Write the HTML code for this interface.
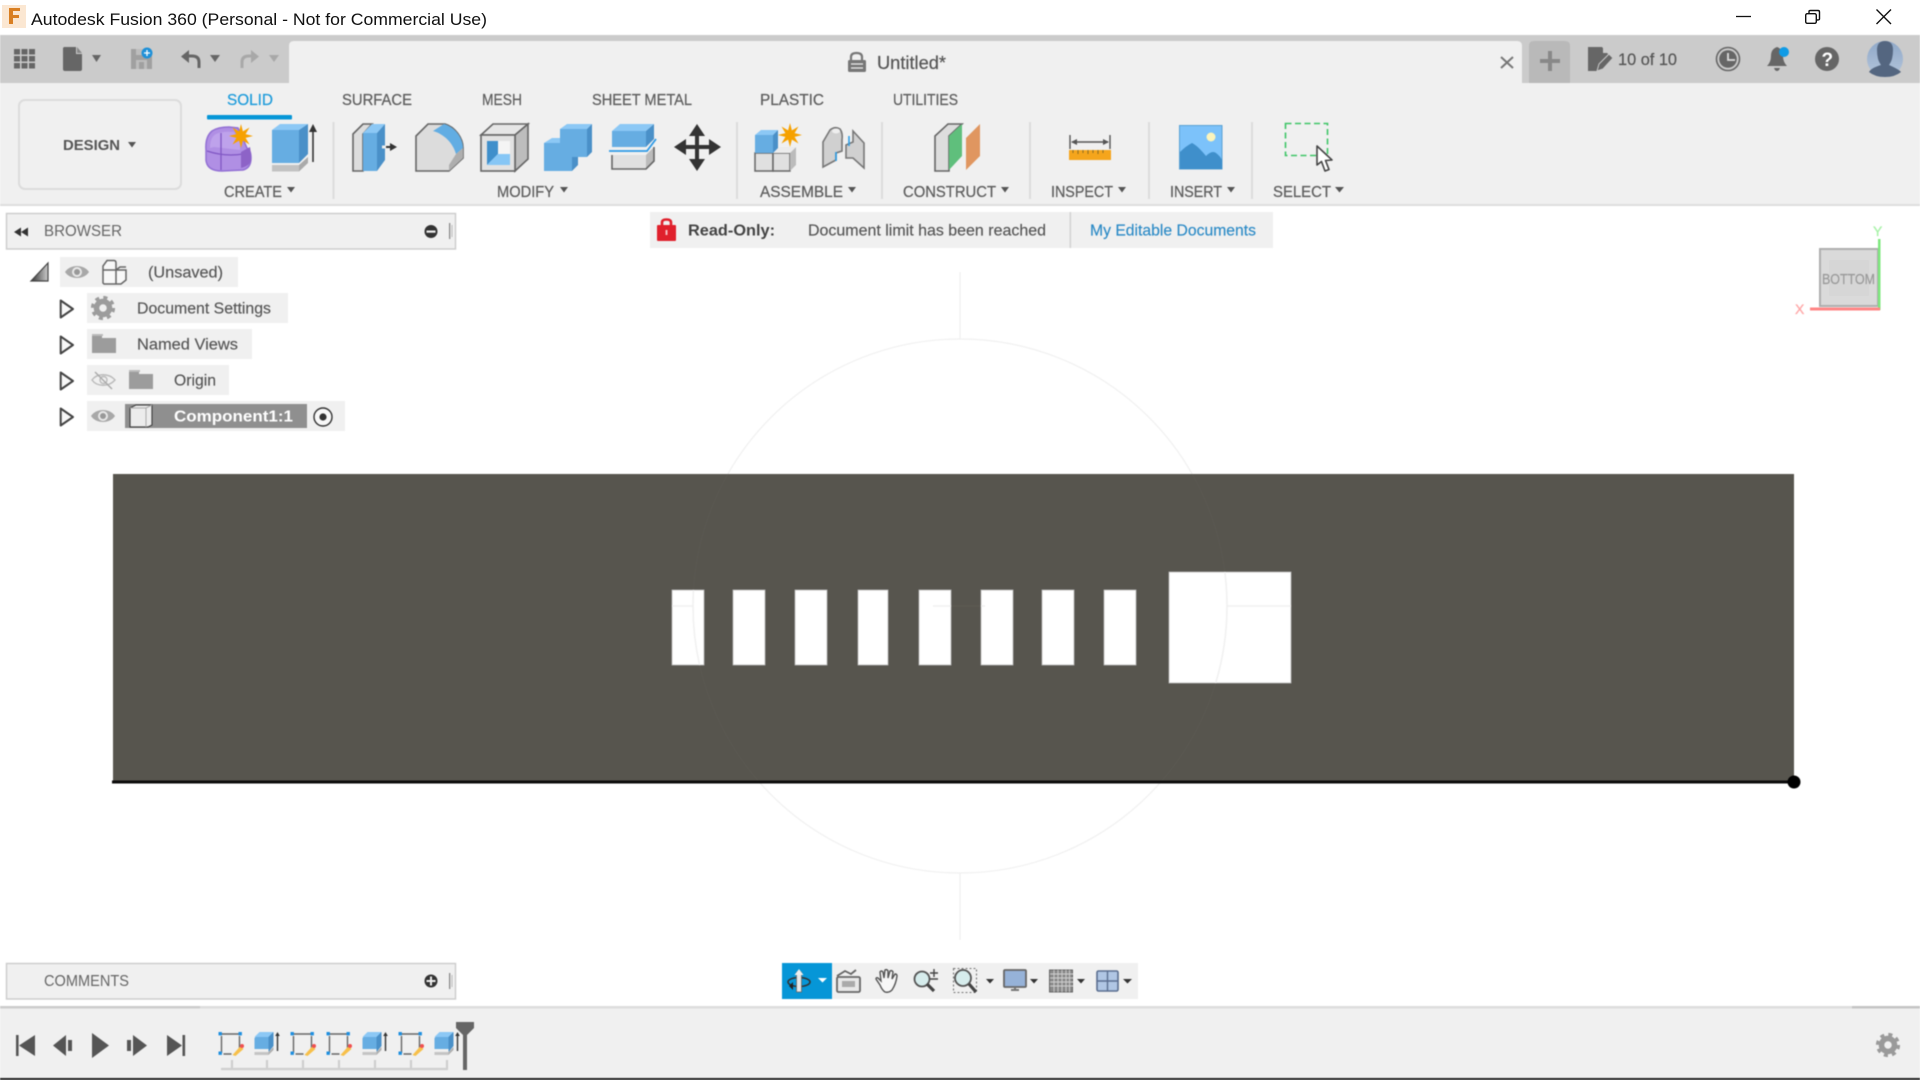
<!DOCTYPE html>
<html><head><meta charset="utf-8"><title>Autodesk Fusion 360</title>
<style>
html,body{margin:0;padding:0;background:#fff;width:1920px;height:1080px;overflow:hidden}
svg{display:block;position:absolute;left:0;top:0}
text{font-family:"Liberation Sans",sans-serif}
.b{filter:blur(.55px)}
</style></head><body>
<svg width="1920" height="1080" viewBox="0 0 1920 1080" xmlns="http://www.w3.org/2000/svg">
<defs>
<clipPath id="holes"><rect x="672" y="590" width="32" height="75"/><rect x="733" y="590" width="32" height="75"/><rect x="795" y="590" width="32" height="75"/><rect x="858" y="590" width="30" height="75"/><rect x="919" y="590" width="32" height="75"/><rect x="981" y="590" width="32" height="75"/><rect x="1042" y="590" width="32" height="75"/><rect x="1104" y="590" width="32" height="75"/><rect x="1169" y="572" width="122" height="111"/></clipPath>
<clipPath id="outside"><rect x="0" y="206" width="1920" height="268"/><rect x="0" y="783" width="1920" height="220"/></clipPath>
<clipPath id="dark"><rect x="113" y="474" width="1681" height="308"/></clipPath>
<polygon id="star" points="0,-12 1.9,-4.6 8.5,-8.5 4.6,-1.9 12,0 4.6,1.9 8.5,8.5 1.9,4.6 0,12 -1.9,4.6 -8.5,8.5 -4.6,1.9 -12,0 -4.6,-1.9 -8.5,-8.5 -1.9,-4.6" fill="#f6a100"/>
<g id="gear"><circle r="6.5" fill="none" stroke="currentColor" stroke-width="5.5"/><circle r="10.3" fill="none" stroke="currentColor" stroke-width="3.6" stroke-dasharray="4 4.09"/></g>
<g id="eye"><path d="M-12,0 C-7,-8 7,-8 12,0 C7,8 -7,8 -12,0Z" fill="#a8a8a8"/><circle r="5" fill="#e8e8e8"/><circle r="3" fill="#999"/></g>
<polygon id="arr" points="0.7,0 0.7,17 13,8.5" fill="#f8f8f8" stroke="#444" stroke-width="2" stroke-linejoin="round"/>
<g id="folder"><path d="M0,3 H10 V5 H24 V20 H0Z" fill="#9c9c9c"/><path d="M0,1 H11 V3 H0Z" fill="#bbb"/></g>
<g id="sk"><path d="M3,2 H21 M3,4 V21 M21,4 V16 M5,22 H13" stroke="#666" stroke-width="1.4" fill="none"/><rect x="0" y="0" width="3.4" height="3.4" fill="#1e8fe0"/><rect x="20" y="0" width="3.4" height="3.4" fill="#1e8fe0"/><rect x="0" y="19.5" width="3.4" height="3.4" fill="#1e8fe0"/><path d="M14,23 L22,14 L25,17 L17,24Z" fill="#f7c04a"/><circle cx="23.5" cy="14" r="2" fill="#f05050"/></g>
<g id="ex"><polygon points="0,6 6,0 19,0 14,6 14,17 0,17" fill="#66ade2"/><polygon points="0,5 5,0 19,0 14,5" fill="#8cc8f5"/><polygon points="14,5 19,0 19,14 14,20" fill="#4a90c8"/><rect x="0" y="20" width="14" height="3" fill="#c4c4c4"/><polygon points="14,20 19,15 19,18 14,23" fill="#b0b0b0"/><path d="M23,3 V19" stroke="#333" stroke-width="1.4"/><polygon points="23,0 25.3,4 20.7,4" fill="#333"/></g>
</defs>

<!-- Title bar -->
<rect width="1920" height="35" fill="#fff"/>
<rect x="2" y="5" width="24" height="23" fill="#fbe7d2"/>
<path d="M9,8 H20 V11 H13 V15 H19 V18 H13 V24 H9Z" fill="#d97f22"/>
<text x="31" y="25" font-size="17" fill="#111" textLength="456" lengthAdjust="spacingAndGlyphs">Autodesk Fusion 360 (Personal - Not for Commercial Use)</text>
<path d="M1736,16.5 H1751" stroke="#111" stroke-width="1.3"/>
<rect x="1805.7" y="13.7" width="10.6" height="9.6" rx="1.5" fill="#fff" stroke="#111" stroke-width="1.4"/>
<path d="M1809,13 V11.5 Q1809,10.5 1810.5,10.5 H1818 Q1819.5,10.5 1819.5,12 V19 Q1819.5,20 1817,20" fill="none" stroke="#111" stroke-width="1.4"/>
<path d="M1876.5,9.5 L1891,24 M1891,9.5 L1876.5,24" stroke="#111" stroke-width="1.4"/>

<g class="b">
<!-- Tab bar -->
<rect y="35" width="1920" height="48" fill="#cbcbcb"/>
<path d="M289,83 V46 Q289,41 294,41 H1517 Q1522,41 1522,46 V83Z" fill="#f0f0f0"/>
<path d="M1529,83 V46 Q1529,41 1534,41 H1565 Q1570,41 1570,46 V83Z" fill="#b9b9b9"/>
<g fill="#666"><rect x="14" y="49" width="6" height="5.5"/><rect x="21.5" y="49" width="6" height="5.5"/><rect x="29" y="49" width="6" height="5.5"/><rect x="14" y="56" width="6" height="5.5"/><rect x="21.5" y="56" width="6" height="5.5"/><rect x="29" y="56" width="6" height="5.5"/><rect x="14" y="63" width="6" height="5.5"/><rect x="21.5" y="63" width="6" height="5.5"/><rect x="29" y="63" width="6" height="5.5"/></g>
<path d="M64,47 H76 V54 H82 V69 Q82,71 80,71 H65 Q63,71 63,69 V48Z" fill="#666"/><path d="M77,47 L82,53 H77Z" fill="#888"/>
<polygon points="92,55 101,55 96.5,62" fill="#666"/>
<path d="M131,49 H147 L152,54 V69 H131Z" fill="#a0a0a0"/><rect x="136" y="49" width="9" height="6" fill="#bdbdbd"/><rect x="136" y="60" width="11" height="9" fill="#bdbdbd"/><rect x="139" y="62" width="5" height="7" fill="#a0a0a0"/>
<circle cx="147" cy="53" r="5.5" fill="#1e90d8"/><path d="M147,50 V56 M144,53 H150" stroke="#fff" stroke-width="1.3"/>
<path d="M199,68 V62 Q199,56 192,56 H185" fill="none" stroke="#666" stroke-width="3"/><polygon points="181,56.5 189,50 189,63" fill="#666"/>
<polygon points="210,55 220,55 215,62" fill="#666"/>
<path d="M242,68 V62 Q242,56 249,56 H255" fill="none" stroke="#a8a8a8" stroke-width="3"/><polygon points="259,56.5 251,50 251,63" fill="#a8a8a8"/>
<polygon points="269,55 279,55 274,62" fill="#a8a8a8"/>
<path d="M851,60 V57 Q851,53 856.5,53 Q862,53 862,57 V60" fill="none" stroke="#777" stroke-width="2.2"/><rect x="848" y="60" width="18" height="12" rx="1.5" fill="#777"/><path d="M851,64 H863 M851,68 H863" stroke="#f0f0f0" stroke-width="1.2"/>
<text x="877" y="69" font-size="18" fill="#555" stroke="#555" stroke-width=".2" textLength="69" lengthAdjust="spacingAndGlyphs">Untitled*</text>
<path d="M1501,57 L1513,68 M1513,57 L1501,68" stroke="#777" stroke-width="2"/>
<path d="M1550,51 V71 M1540,61 H1560" stroke="#888" stroke-width="4"/>
<path d="M1588,47 H1602 L1608,54 V58 L1598,71 H1588Z" fill="#666"/><path d="M1603,47 L1608,53 H1603Z" fill="#cbcbcb"/><path d="M1597,71 L1599,64 L1609,54 L1613,58 L1603,69Z" fill="#666" stroke="#cbcbcb" stroke-width="1"/>
<text x="1618" y="65" font-size="17" fill="#555" stroke="#555" stroke-width=".2" textLength="59" lengthAdjust="spacingAndGlyphs">10 of 10</text>
<circle cx="1728" cy="59" r="11.5" fill="none" stroke="#666" stroke-width="1.6"/><circle cx="1728" cy="59" r="8.8" fill="#666"/><path d="M1728,53 V60 H1735" fill="none" stroke="#ddd" stroke-width="1.8"/>
<path d="M1767,66 Q1771,62 1771,56 Q1771,49 1777,47 Q1783,49 1783,56 Q1783,62 1787,66Z" fill="#666"/><path d="M1774,68 H1780 Q1779,71 1777,71 Q1775,71 1774,68Z" fill="#666"/>
<circle cx="1784" cy="52" r="5" fill="#0f9be6"/>
<circle cx="1827" cy="59" r="12" fill="#666"/><text x="1821.5" y="66" font-size="19" font-weight="bold" fill="#fff">?</text>
<defs><linearGradient id="av" x1="0" y1="0" x2="0" y2="1"><stop offset="0" stop-color="#8fa8c8"/><stop offset="1" stop-color="#b5c6dc"/></linearGradient></defs>
<circle cx="1885" cy="59" r="18" fill="url(#av)"/>
<path d="M1877,50 Q1877,41 1885,41 Q1893,41 1893,50 Q1893,60 1889,65 Q1900,70 1901,72 Q1895,77 1885,77 Q1875,77 1869,72 Q1871,68 1881,65 Q1877,60 1877,50Z" fill="#546680"/>

<!-- Toolbar -->
<rect y="83" width="1920" height="121" fill="#f0f0f0"/>
<rect y="204" width="1920" height="2" fill="#dedede"/>
<rect x="19" y="100" width="162" height="89" rx="6" fill="#f0f0f0" stroke="#dcdcdc" stroke-width="2"/>
<text x="63" y="150" font-size="15" font-weight="bold" fill="#555" textLength="57" lengthAdjust="spacingAndGlyphs">DESIGN</text>
<polygon points="128,142 136,142 132,147.5" fill="#555"/>
<text x="227" y="105" font-size="16" fill="#1f9cdb" stroke="#1f9cdb" stroke-width=".25" textLength="46" lengthAdjust="spacingAndGlyphs">SOLID</text>
<rect x="207" y="115" width="85" height="4.5" rx="1" fill="#0696d7"/>
<g font-size="16" fill="#5e5e5e" stroke="#5e5e5e" stroke-width=".25">
<text x="342" y="105" textLength="70" lengthAdjust="spacingAndGlyphs">SURFACE</text>
<text x="482" y="105" textLength="40" lengthAdjust="spacingAndGlyphs">MESH</text>
<text x="592" y="105" textLength="100" lengthAdjust="spacingAndGlyphs">SHEET METAL</text>
<text x="760" y="105" textLength="64" lengthAdjust="spacingAndGlyphs">PLASTIC</text>
<text x="893" y="105" textLength="65" lengthAdjust="spacingAndGlyphs">UTILITIES</text>
<text x="224" y="197" textLength="58" lengthAdjust="spacingAndGlyphs">CREATE</text>
<text x="497" y="197" textLength="57" lengthAdjust="spacingAndGlyphs">MODIFY</text>
<text x="760" y="197" textLength="83" lengthAdjust="spacingAndGlyphs">ASSEMBLE</text>
<text x="903" y="197" textLength="93" lengthAdjust="spacingAndGlyphs">CONSTRUCT</text>
<text x="1051" y="197" textLength="62" lengthAdjust="spacingAndGlyphs">INSPECT</text>
<text x="1170" y="197" textLength="52" lengthAdjust="spacingAndGlyphs">INSERT</text>
<text x="1273" y="197" textLength="58" lengthAdjust="spacingAndGlyphs">SELECT</text>
</g>
<g fill="#555">
<polygon points="287,187 295,187 291,192.5"/><polygon points="560,187 568,187 564,192.5"/><polygon points="848,187 856,187 852,192.5"/><polygon points="1001,187 1009,187 1005,192.5"/><polygon points="1118,187 1126,187 1122,192.5"/><polygon points="1227,187 1235,187 1231,192.5"/><polygon points="1335,187 1344,187 1339.5,192.5"/>
</g>
<g fill="#dcdcdc"><rect x="332.5" y="122" width="2" height="77"/><rect x="736" y="122" width="2" height="77"/><rect x="881" y="122" width="2" height="77"/><rect x="1029" y="122" width="2" height="77"/><rect x="1148" y="122" width="2" height="77"/><rect x="1251" y="122" width="2" height="77"/></g>

<!-- Create form -->
<path d="M206,150 Q205,137 212,131 Q218,127 229,127 L238,128 L247,148 Q251,150 251,158 Q251,168 243,170 L222,171 Q207,171 206,160Z" fill="#b08fe4" stroke="#9270d4" stroke-width="1.5"/>
<path d="M210,148 Q210,137 216,134 Q222,131 234,132 L240,142 L240,150 L214,147Z" fill="#c4aaee" opacity=".7"/>
<path d="M207,151 Q225,157 243,154 M221,133 V170" stroke="#8157c4" stroke-width="1.3" fill="none"/>
<path d="M241,152 L250,147 Q251,152 251,160 Q250,166 241,168Z" fill="#8d63c7"/>
<use href="#star" transform="translate(241,136)"/>
<!-- Extrude -->
<polygon points="272,130 299,130 299,163 272,163" fill="#66ade2"/><polygon points="272,130 280,124 308,124 299,130" fill="#8cc8f5"/><polygon points="299,130 308,124 308,154 299,163" fill="#4a90c8"/>
<rect x="272" y="165" width="27" height="6.5" fill="#c2c2c2"/><polygon points="299,165 308,157 308,163 299,171.5" fill="#aaa"/>
<path d="M313,130 V162" stroke="#333" stroke-width="1.6"/><polygon points="313,124 317,132 309,132" fill="#333"/>
<!-- Press pull -->
<path d="M353,171 V134 L363,124 H372 L363,134 V171Z" fill="#ddd" stroke="#666" stroke-width="1.6"/>
<polygon points="363,133 377,133 377,171 363,171" fill="#66ade2"/><polygon points="363,133 372,124 385,124 377,133" fill="#8cc8f5"/><polygon points="377,133 385,124 385,160 377,171" fill="#4a90c8"/>
<path d="M382,147 H392" stroke="#333" stroke-width="2"/><polygon points="397,147 390,143 390,151" fill="#333"/>
<path d="M382,147 H386" stroke="#eee" stroke-width="3"/>
<!-- Fillet -->
<path d="M416,171 V136 L428,124 H445 C455,127 463,138 463,148 V158 L449,171Z" fill="#dcdcdc" stroke="#666" stroke-width="1.6"/>
<path d="M433,131 L444,124 C455,127 463,138 463,148 L456,154 C453,143 444,134 433,131Z" fill="#62ade3"/>
<path d="M456,154 L463,148 V158 L449,171 V165Z" fill="#aeaeae"/>
<!-- Shell -->
<polygon points="481,135 493,124 528,124 515,135" fill="#e6e6e6" stroke="#666" stroke-width="1.6"/><polygon points="515,135 528,124 528,159 515,171" fill="#bdbdbd" stroke="#666" stroke-width="1.6"/><rect x="481" y="135" width="34" height="36" fill="#e2e2e2" stroke="#666" stroke-width="1.6"/>
<rect x="487" y="141" width="23" height="24" fill="#f4f4f4"/><polygon points="487,141 498,141 498,154 487,165" fill="#3f8fcb"/><polygon points="498,154 510,154 510,165 487,165" fill="#86c6f5"/>
<!-- Combine -->
<polygon points="544,143 572,143 572,171 544,171" fill="#66ade2"/><polygon points="544,143 552,138 566,138 560,143" fill="#8cc8f5"/><polygon points="572,157 578,157 578,165 572,171" fill="#4a90c8"/>
<polygon points="560,129 587,129 587,157 560,157" fill="#66ade2"/><polygon points="560,129 567,124 592,124 587,129" fill="#8cc8f5"/><polygon points="587,129 592,124 592,152 587,157" fill="#4a90c8"/>
<!-- Offset plane -->
<polygon points="612,131 646,131 646,147 612,147" fill="#66ade2"/><polygon points="612,131 620,124 654,124 646,131" fill="#8cc8f5"/><polygon points="646,131 654,124 654,139 646,147" fill="#4a90c8"/>
<path d="M609,151 H647 L656,139" fill="none" stroke="#2e9ae6" stroke-width="1.8"/>
<path d="M612,155 H646 L654,147 V161 L646,169 H612Z" fill="#e0e0e0"/><path d="M646,155 L654,147 V161 L646,169Z" fill="#bbb"/>
<path d="M612,155 V169 H646 L654,161 V147" fill="none" stroke="#666" stroke-width="1.6"/>
<!-- Move -->
<path d="M697,128 V166 M678,147 H716" stroke="#333" stroke-width="4"/>
<polygon points="697,124 705,136 689,136" fill="#333"/><polygon points="697,171 705,159 689,159" fill="#333"/><polygon points="674,147 686,139 686,155" fill="#333"/><polygon points="721,147 709,139 709,155" fill="#333"/>
<!-- New component -->
<rect x="755" y="153" width="18" height="18" fill="#e0e0e0" stroke="#666" stroke-width="1.5"/><path d="M773,153 H790 V171 H773Z" fill="#e0e0e0" stroke="#666" stroke-width="1.5"/><polygon points="790,153 796,147 796,165 790,171" fill="#bbb"/><polygon points="773,153 779,147 796,147 790,153" fill="#ececec"/>
<polygon points="755,135 773,135 773,153 755,153" fill="#66ade2"/><polygon points="755,135 761,130 778,130 773,135" fill="#8cc8f5"/><polygon points="773,135 778,130 778,148 773,153" fill="#4a90c8"/>
<use href="#star" transform="translate(790,135)"/>
<!-- Joint -->
<path d="M823,167 V142 L830,130 Q835,126 840,129 Q843,133 842,140 V151 L836,153 V160Z" fill="#d0d0d0" stroke="#777" stroke-width="1.6"/>
<ellipse cx="836" cy="131" rx="4" ry="2.5" fill="#eee"/>
<path d="M846,145 L853,142 V131 L864,143 V168 L853,158 H846Z" fill="#d0d0d0" stroke="#777" stroke-width="1.6"/>
<path d="M836,152 V161 M849,136 V146" stroke="#2d9ee6" stroke-width="1.6"/>
<!-- Construct -->
<path d="M935,171 V136 L948,124 H962 L949,136 V171Z" fill="#ddd" stroke="#666" stroke-width="1.6"/>
<polygon points="949,136 962,124 962,156 949,170" fill="#5fbf7c"/>
<polygon points="966,138 980,124 980,156 966,170" fill="#e09660"/>
<!-- Measure -->
<path d="M1070,135 V149 M1110,135 V149" stroke="#555" stroke-width="1.4"/><path d="M1072,142 H1108" stroke="#555" stroke-width="1.4"/><polygon points="1071,142 1077,139 1077,145" fill="#555"/><polygon points="1109,142 1103,139 1103,145" fill="#555"/>
<rect x="1069" y="150" width="42" height="10" fill="#f5a51c"/><path d="M1073,150 V153 M1078,150 V154 M1083,150 V153 M1088,150 V154 M1093,150 V153 M1098,150 V154 M1103,150 V153" stroke="#8a6a22" stroke-width="1"/>
<!-- Insert -->
<rect x="1179.5" y="125.5" width="42.5" height="43.5" fill="#7cc2fa" stroke="#5aa2d4"/>
<path d="M1180,169 V152 Q1186,146 1192,143 Q1198,146 1206,156 Q1212,150 1216,153 Q1220,156 1222,160 V169Z" fill="#3f8fcb"/>
<circle cx="1211" cy="137" r="4.5" fill="#fbf4bc"/>
<!-- Select -->
<rect x="1285.5" y="123.5" width="42" height="32" fill="none" stroke="#3ec567" stroke-width="1.6" stroke-dasharray="6 3.5"/>
<path d="M1317,146 V165 L1321.5,161.5 L1325,171 L1329,169.5 L1325.5,160.5 L1332,160 Z" fill="#fff" stroke="#444" stroke-width="1.6" stroke-linejoin="round"/>

<!-- Viewport faint guides -->
<path d="M960,272 V339 M960,873 V940" stroke="#efefef" stroke-width="1.2"/>
<circle cx="960" cy="606" r="267" fill="none" stroke="#f0f0f0" stroke-width="1.2" clip-path="url(#outside)"/>

<!-- Body -->
<rect x="113" y="474" width="1681" height="308" fill="#57554e"/>
<circle cx="960" cy="606" r="267" fill="none" stroke="#5a5851" stroke-width="1.2" clip-path="url(#dark)"/>
<path d="M930,606 H985" stroke="#5c5a53" stroke-width="1.2"/>
<g fill="#fff" stroke="#bbb" stroke-width=".8">
<rect x="672" y="590" width="32" height="75"/><rect x="733" y="590" width="32" height="75"/><rect x="795" y="590" width="32" height="75"/><rect x="858" y="590" width="30" height="75"/><rect x="919" y="590" width="32" height="75"/><rect x="981" y="590" width="32" height="75"/><rect x="1042" y="590" width="32" height="75"/><rect x="1104" y="590" width="32" height="75"/><rect x="1169" y="572" width="122" height="111"/>
</g>
<g clip-path="url(#holes)"><circle cx="960" cy="606" r="267" fill="none" stroke="#f0f0f0" stroke-width="1.5"/>
<path d="M672,606 H693 M933,606 H985 M1227,606 H1291" stroke="#f0f0f0" stroke-width="1.5"/></g>
<path d="M112,782 H1794" stroke="#0c0c0c" stroke-width="3"/>
<circle cx="1794" cy="782" r="6.5" fill="#000"/>

<!-- Read-only -->
<rect x="650" y="212" width="623" height="36" fill="#f0f0f0"/>
<path d="M662,226 V222.5 Q662,219.5 666.5,219.5 Q671,219.5 671,222.5 V226" fill="none" stroke="#e0202c" stroke-width="2.6"/><rect x="657" y="225" width="19" height="16" rx="1" fill="#e0202c"/><rect x="665.5" y="230" width="2" height="5" fill="#fff" opacity=".7"/>
<text x="688" y="235.5" font-size="16" font-weight="bold" fill="#444" textLength="87" lengthAdjust="spacingAndGlyphs">Read-Only:</text>
<text x="808" y="235.5" font-size="16" fill="#555" stroke="#555" stroke-width=".15" textLength="238" lengthAdjust="spacingAndGlyphs">Document limit has been reached</text>
<rect x="1069.5" y="212" width="1.6" height="36" fill="#d4d4d4"/>
<text x="1090" y="235.5" font-size="16" fill="#2b8ac6" stroke="#2b8ac6" stroke-width=".15" textLength="166" lengthAdjust="spacingAndGlyphs">My Editable Documents</text>

<!-- Viewcube -->
<rect x="1820" y="249" width="58" height="57" fill="#dadada" stroke="#aeaeae" stroke-width="2"/>
<rect x="1829" y="260" width="40" height="36" fill="#d6d6d6"/>
<text x="1822" y="284" font-size="15" fill="#9a9a9a" stroke="#9a9a9a" stroke-width=".2" textLength="53" lengthAdjust="spacingAndGlyphs">BOTTOM</text>
<rect x="1878" y="239" width="2.5" height="71" fill="#7ce87c"/>
<rect x="1810" y="307.5" width="70" height="3" fill="#ff8585"/>
<text x="1873" y="236" font-size="14" fill="#a8f2a8" stroke="#a8f2a8" stroke-width=".3">Y</text>
<text x="1795" y="314" font-size="14" fill="#ffa8a8" stroke="#ffa8a8" stroke-width=".3">X</text>

<!-- Browser -->
<rect x="6.5" y="213.5" width="449" height="35.5" fill="#f0f0f0" stroke="#cbcbcb" stroke-width="1.4"/>
<polygon points="14,232 21,227.5 21,236.5" fill="#333"/><polygon points="21,232 28,227.5 28,236.5" fill="#333"/>
<text x="44" y="236" font-size="15.5" fill="#666" textLength="78" lengthAdjust="spacingAndGlyphs">BROWSER</text>
<circle cx="431" cy="231.5" r="6.5" fill="#333"/><rect x="426.5" y="230.5" width="9" height="2.2" fill="#f0f0f0"/>
<rect x="449" y="223" width="1.3" height="16" fill="#888"/><rect x="451.5" y="225" width="1" height="12" fill="#bbb"/>
<g fill="#f0f0f0"><rect x="60" y="257" width="178" height="30"/><rect x="87" y="293" width="201" height="30"/><rect x="87" y="329" width="165" height="30"/><rect x="87" y="365" width="142" height="30"/><rect x="87" y="401" width="258" height="30"/></g>
<defs><linearGradient id="tri" x1="0" y1="0" x2="1" y2="0"><stop offset="0" stop-color="#333"/><stop offset="1" stop-color="#ccc"/></linearGradient></defs>
<polygon points="31,281 48,263 48,281" fill="url(#tri)" stroke="#444" stroke-width="1.2"/>
<use href="#arr" x="60" y="300.5"/><use href="#arr" x="60" y="336.5"/><use href="#arr" x="60" y="372.5"/><use href="#arr" x="60" y="408.5"/>
<use href="#eye" x="77" y="272"/>
<path d="M103,283 V266 L107,260.5 H114 Q116,260.5 116,263 V270 H126 V280 L121,284 H104Z M103,270 H116 V284 M116,270 L120,267 H126" fill="#f8f8f8" stroke="#666" stroke-width="1.5"/>
<text x="148" y="277.5" font-size="15.5" fill="#555" stroke="#555" stroke-width=".15" textLength="75" lengthAdjust="spacingAndGlyphs">(Unsaved)</text>
<use href="#gear" x="103" y="308" color="#9c9c9c"/>
<text x="137" y="313.5" font-size="15.5" fill="#555" stroke="#555" stroke-width=".15" textLength="134" lengthAdjust="spacingAndGlyphs">Document Settings</text>
<use href="#folder" x="92" y="333"/>
<text x="137" y="349.5" font-size="15.5" fill="#555" stroke="#555" stroke-width=".15" textLength="101" lengthAdjust="spacingAndGlyphs">Named Views</text>
<path d="M92,380 C97,373 109,373 115,380 C109,387 97,387 92,380Z" fill="none" stroke="#bbb" stroke-width="1.4"/><circle cx="103.5" cy="380" r="3.5" fill="none" stroke="#bbb" stroke-width="1.4"/><path d="M95,372 L112,389" stroke="#aaa" stroke-width="1.4"/>
<use href="#folder" x="129" y="369"/>
<text x="174" y="385.5" font-size="15.5" fill="#555" stroke="#555" stroke-width=".15" textLength="42" lengthAdjust="spacingAndGlyphs">Origin</text>
<use href="#eye" x="103" y="416"/>
<rect x="125" y="404" width="182" height="24" fill="#8f8f8f"/>
<path d="M130,408 L136,405 H152 V425 L148,427 H130Z" fill="#ececec" stroke="#444" stroke-width="1.2"/><path d="M130,408 H146 V427 M146,408 L152,405" fill="none" stroke="#aaa" stroke-width="1"/>
<text x="174" y="421.5" font-size="15.5" font-weight="bold" fill="#fff" textLength="119" lengthAdjust="spacingAndGlyphs">Component1:1</text>
<circle cx="323" cy="417" r="9" fill="#f8f8f8" stroke="#333" stroke-width="1.4"/><circle cx="323" cy="417" r="3.6" fill="#333"/>

<!-- Comments -->
<rect x="6.5" y="963.5" width="449" height="35.5" fill="#f0f0f0" stroke="#cbcbcb" stroke-width="1.4"/>
<text x="44" y="986" font-size="15.5" fill="#666" textLength="85" lengthAdjust="spacingAndGlyphs">COMMENTS</text>
<circle cx="431" cy="981" r="6.5" fill="#333"/><path d="M426.5,981 H435.5 M431,976.5 V985.5" stroke="#f0f0f0" stroke-width="2"/>
<rect x="449" y="973" width="1.3" height="16" fill="#888"/><rect x="451.5" y="975" width="1" height="12" fill="#bbb"/>

<!-- Nav bar -->
<rect x="782" y="963" width="356" height="36" fill="#f0f0f0"/>
<rect x="782" y="963" width="50" height="36" fill="#0696d7"/>
<ellipse cx="799" cy="982" rx="11" ry="4.5" fill="none" stroke="#333" stroke-width="1.6"/>
<rect x="796.5" y="972" width="5" height="20" fill="#e8e8e8" stroke="#666" stroke-width=".8"/><polygon points="799,969 803.5,975 794.5,975" fill="#eee"/>
<polygon points="789,986 793,982 793,990" fill="#222"/>
<polygon points="818,978 827,978 822.5,982.5" fill="#fff"/>
<rect x="837" y="977" width="23" height="15" rx="1.5" fill="#e8e8e8" stroke="#666" stroke-width="1.8"/><rect x="842" y="981" width="13" height="6" fill="#aaa"/><path d="M837,976 L845,971 L851,974 L856,970" fill="none" stroke="#666" stroke-width="1.8"/>
<path d="M880,985 L876,979 Q876,977 878,978 L881,981 L880,972 Q881,970 883,972 L884,978 L885,970 Q887,969 888,971 V978 L890,971 Q892,970 893,972 L892,979 L895,974 Q897,974 897,976 Q896,984 892,990 Q889,993 885,992 Q882,990 880,985Z" fill="#f7f7f7" stroke="#555" stroke-width="1.4"/>
<circle cx="922" cy="979" r="7.5" fill="#d6ecec" stroke="#555" stroke-width="1.8"/><path d="M927,984 L934,991" stroke="#444" stroke-width="3.2"/><path d="M930,973 H938 M934,969 V977 M930,979 H938" stroke="#444" stroke-width="1.4"/>
<rect x="953.5" y="968.5" width="23" height="24" fill="none" stroke="#777" stroke-width="1.1" stroke-dasharray="2 2"/><circle cx="963" cy="978" r="8" fill="#d6ecec" stroke="#555" stroke-width="1.8"/><path d="M969,984 L976,992" stroke="#444" stroke-width="3.2"/>
<polygon points="986,979 994,979 990,983.5" fill="#333"/>
<rect x="1004" y="970" width="22" height="17" rx="1" fill="#96b2d8" stroke="#666" stroke-width="1.8"/><path d="M1011,990 H1019 M1015,987 V990" stroke="#777" stroke-width="2"/>
<polygon points="1030,979 1038,979 1034,983.5" fill="#333"/>
<rect x="1049.5" y="970" width="23" height="22" fill="#8a8a8a" stroke="#666"/><path d="M1054,970 V992 M1058,970 V992 M1062,970 V992 M1066,970 V992 M1069.5,970 V992 M1050,974 H1073 M1050,978 H1073 M1050,982 H1073 M1050,986 H1073" stroke="#d0d0d0" stroke-width=".9"/>
<polygon points="1077,979 1085,979 1081,983.5" fill="#333"/>
<rect x="1097" y="971" width="21" height="20" rx="1.5" fill="#b0c6e4" stroke="#5a6e90" stroke-width="1.6"/><path d="M1107.5,971 V991 M1097,981 H1118" stroke="#5a6e90" stroke-width="1.4"/>
<polygon points="1123,979 1132,979 1127.5,983.5" fill="#333"/>

<!-- Timeline -->
<rect y="1006" width="1920" height="2.5" fill="#dddddd"/>
<rect y="1006" width="200" height="2.5" fill="#cccccc"/><rect x="1852" y="1006" width="68" height="2.5" fill="#c4c4c4"/>
<rect y="1008.5" width="1920" height="69.5" fill="#f0f0f0"/>
<rect y="1078" width="1920" height="2" fill="#222"/>
<g fill="#555">
<rect x="16" y="1035" width="2.6" height="21"/><polygon points="19,1045.5 35,1035 35,1056"/>
<polygon points="53,1045.5 66,1035 66,1056"/><rect x="68" y="1040" width="4" height="11"/>
<polygon points="92,1033 109,1045.5 92,1058"/>
<rect x="127" y="1040" width="4" height="11"/><polygon points="133,1035 147,1045.5 133,1056"/>
<polygon points="167,1035 182,1045.5 167,1056"/><rect x="182.5" y="1035" width="2.6" height="21"/>
</g>
<use href="#sk" x="218.5" y="1032"/><use href="#ex" x="254.5" y="1032"/><use href="#sk" x="290.5" y="1032"/><use href="#sk" x="326.5" y="1032"/><use href="#ex" x="362.5" y="1032"/><use href="#sk" x="398.5" y="1032"/><use href="#ex" x="434.5" y="1032"/>
<path d="M221,1069 H448 M232,1060 V1069 M267,1060 V1069 M303,1060 V1069 M339,1060 V1069 M375,1060 V1069 M411,1060 V1069 M447,1060 V1069" stroke="#cfcfcf" stroke-width="2.2"/>
<path d="M456,1022 H474 V1028 L467,1035 V1070 H463 V1035 L456,1028Z" fill="#666"/>
<use href="#gear" x="1888" y="1045" color="#9a9a9a"/>
</g>
</svg>
</body></html>
